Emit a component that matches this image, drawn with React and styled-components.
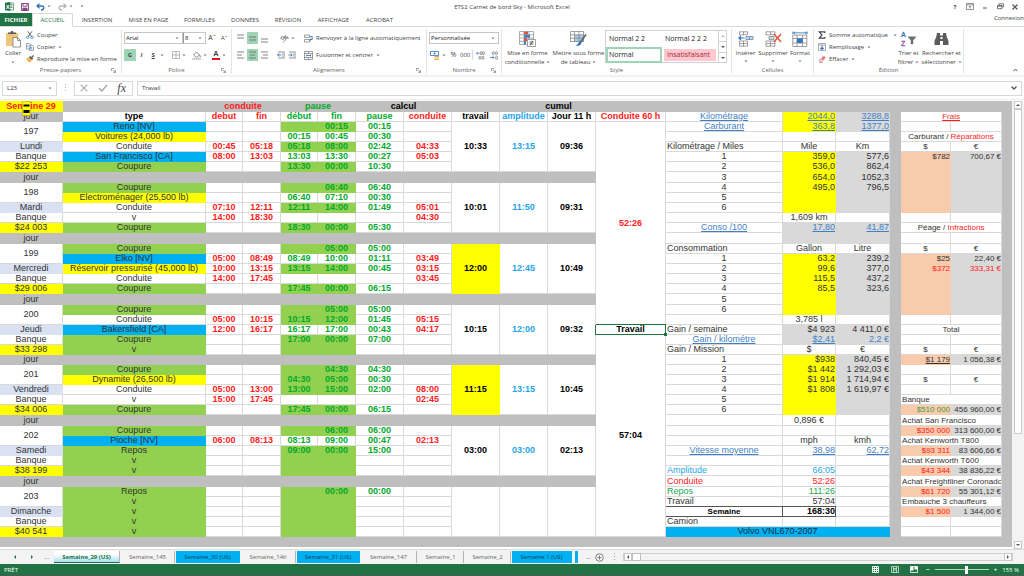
import React from "react";
import styled, { createGlobalStyle, css } from "styled-components";

const UI = '"Open Sans", "Noto Sans", sans-serif';
const SHEET = '"Liberation Sans", Arial, sans-serif';

const C = {
  excel: "#217346",
  line: "#d9d9d9",
  gray: "#bfbfbf",
  silver: "#d9d9d9",
  yellow: "#ffff00",
  blue: "#00b0f0",
  green: "#92d050",
  lavender: "#d9e1f2",
  peach: "#f8cbad",
  white: "#ffffff",
  red: "#ff1a1a",
  time: "#00aa2b",
  ink: "#333333",
  link: "#3f7fc6",
  sky: "#25a5ea",
};

const GlobalStyle = createGlobalStyle`
  *, *::before, *::after { box-sizing: border-box; }
  body { margin: 0; background: #fff; font: 6px/8px ${UI}; color: #444; }
  button, input, select { font: inherit; color: inherit; margin: 0; padding: 0; border: 0; background: none; }
  svg { display: block; flex: none; }
`;

const Window = styled.div`
  display: flex;
  flex-direction: column;
  min-height: 100vh;
  overflow: hidden;
`;

/* ---------- title bar and ribbon tabs ---------- */

const TitleBar = styled.header`
  display: grid;
  grid-template-columns: 1fr auto 1fr;
  align-items: center;
  height: 13px;
  padding: 0 5px;
`;

const TitleIcons = styled.div`
  display: flex;
  align-items: center;
  gap: ${(p) => p.$gap}px;
  justify-content: ${(p) => (p.$end ? "flex-end" : "flex-start")};
`;

const Title = styled.h1`
  margin: 0;
  font: inherit;
`;

const IconButton = styled.button`
  display: flex;
  align-items: center;
  justify-content: center;
  gap: 2px;
  flex: none;
  min-width: ${(p) => p.$w || 8}px;
  height: ${(p) => p.$h || 12}px;
  background: ${(p) => (p.$on ? "#9fd5b7" : "transparent")};
  font-weight: ${(p) => (p.$bold ? 700 : 400)};
  font-size: ${(p) => p.$size || 6}px;
`;

const Tabs = styled.nav`
  display: flex;
  height: 14px;
  border-bottom: 1px solid ${C.line};
`;

const Tab = styled.button`
  flex: none;
  width: ${(p) => p.$w}px;
  height: 14px;
  color: ${(p) => (p.$active ? C.excel : "#444")};
  ${(p) => p.$active && css`
    background: #fff;
    border: 1px solid ${C.line};
    border-bottom-color: #fff;
  `}
  ${(p) => p.$file && css`
    background: ${C.excel};
    color: #fff;
    font-weight: 700;
    height: 13px;
  `}
`;

const Connexion = styled.a`
  margin-left: auto;
  padding-top: 1px;
  color: #444;
  text-decoration: none;
`;

/* ---------- ribbon ---------- */

const Ribbon = styled.div`
  display: grid;
  grid-template-columns: 122px 110px 195px 75px 230px 82px 150px 1fr;
  height: 50px;
  padding: 2px 0;
  border-bottom: 2px solid #f1f1f1;
`;

const GroupBox = styled.section`
  display: flex;
  flex-direction: column;
  justify-content: space-between;
  border-right: 1px solid #e4e4e4;
  white-space: nowrap;
`;

const GroupBody = styled.div`
  display: flex;
  height: 37px;
  gap: ${(p) => p.$gap || 0}px;
  padding: ${(p) => p.$pad || "0"};
`;

const GroupFoot = styled.footer`
  display: grid;
  grid-template-columns: 10px 1fr 10px;
  align-items: center;
  height: 8px;
  text-align: center;
  color: #666;
`;

const Column = styled.div`
  display: flex;
  flex-direction: column;
  align-items: flex-start;
  gap: ${(p) => p.$gap || 0}px;
`;

const Line = styled.div`
  display: flex;
  align-items: center;
  gap: ${(p) => p.$gap || 0}px;
  height: 12px;
`;

const BigButton = styled.button`
  display: flex;
  flex-direction: column;
  align-items: center;
  gap: 1px;
  width: ${(p) => p.$w}px;
  line-height: 8px;
`;

const BigIcon = styled.span`
  display: flex;
  align-items: center;
  justify-content: center;
  height: 19px;
`;

const CommandButton = styled.button`
  display: flex;
  align-items: center;
  gap: 3px;
  height: 12px;
`;

const CommandRow = styled.span`
  display: flex;
  align-items: center;
  gap: 2px;
  height: 8px;
`;

const Combo = styled.span`
  position: relative;
  display: flex;
  width: ${(p) => p.$w}px;
  height: 12px;
  border: 1px solid #c6c6c6;
  & + & { border-left-color: #999; }
  select {
    appearance: none;
    width: 100%;
    padding-left: 1px;
    color: #222;
  }
`;

const ComboArrow = styled.span`
  position: absolute;
  right: 3px;
  top: 4px;
  pointer-events: none;
`;

const VLine = styled.span`
  width: 1px;
  height: 10px;
  background: ${C.line};
`;

const Gallery = styled.div`
  display: grid;
  grid-template-columns: 56px 56px 8px;
  grid-template-rows: 16px 16px;
  height: 33px;
  border: 1px solid #d0d0d0;
`;

const StyleCell = styled.button`
  padding-left: ${(p) => (p.$on ? 1 : 3)}px;
  text-align: left;
  font-size: 7px;
  color: ${(p) => (p.$bad ? "#9c2b3a" : "#222")};
  background: ${(p) => (p.$bad ? "#ffc7ce" : "#fff")};
  margin: ${(p) => (p.$bad ? "2px" : "0")};
  border: ${(p) => (p.$on ? "2px solid #9fd5b7" : "0")};
`;

const GalleryScroll = styled.div`
  grid-column: 3;
  grid-row: 1 / 3;
  display: flex;
  flex-direction: column;
  border-left: 1px solid #d0d0d0;
  button {
    flex: 1;
    display: flex;
    align-items: center;
    justify-content: center;
  }
  button + button { border-top: 1px solid #d0d0d0; }
`;

const CollapseCorner = styled.div`
  display: flex;
  justify-content: flex-end;
  align-items: flex-end;
  padding: 0 6px 2px 0;
`;

/* ---------- formula bar ---------- */

const FormulaBar = styled.div`
  display: flex;
  align-items: center;
  gap: 4px;
  height: 23px;
  padding: 0 2px;
  border-bottom: 1px solid #ededed;
`;

const Field = styled.label`
  display: flex;
  align-items: center;
  height: 15px;
  border: 1px solid ${C.line};
  padding: 0 4px;
  ${(p) => (p.$w ? `width: ${p.$w}px;` : "flex: 1;")}
  input {
    flex: 1;
    min-width: 0;
    font-size: 6px;
    color: #333;
    outline: 0;
  }
`;

const FormulaButtons = styled.div`
  display: flex;
  align-items: center;
  justify-content: space-between;
  width: 59px;
  height: 15px;
  padding: 0 6px 0 5px;
  border: 1px solid ${C.line};
`;

/* ---------- sheet ---------- */

const SheetArea = styled.main`
  display: flex;
  flex: 1;
  padding-top: 1px;
`;

const SheetPane = styled.div`
  position: relative;
  flex: 1;
  min-width: 0;
`;

const Grid = styled.table`
  width: 100%;
  table-layout: fixed;
  border-collapse: separate;
  border-spacing: 0;
  font: 9px/9px ${SHEET};
`;

const Row = styled.tr`
  height: ${(p) => p.$h || 10}px;
`;

const Cell = styled.td`
  padding: ${(p) => (p.$align === "left" ? "0 0 0 1px" : "0")};
  overflow: hidden;
  white-space: nowrap;
  vertical-align: middle;
  text-align: ${(p) => p.$align || "center"};
  background: ${(p) => p.$bg || C.white};
  color: ${(p) => p.$color || C.ink};
  font-weight: ${(p) => (p.$bold ? 700 : 400)};
  font-size: ${(p) => (p.$small ? 8 : 9)}px;
  text-decoration: ${(p) => (p.$under ? "underline" : "none")};
  border: 0 solid ${(p) => (p.$bg && p.$bg !== C.white ? p.$bg : C.line)};
  border-width: 0 1px 1px 0;
  ${(p) => p.$framed && css`
    border-color: #555;
    box-shadow: 0 -1px 0 #555;
  `}
  ${(p) => p.$selected && css`
    position: relative;
    overflow: visible;
    border-color: ${C.excel};
    box-shadow: -1px 0 0 ${C.excel}, 0 -1px 0 ${C.excel};
    color: #000;
    &::after {
      content: "";
      position: absolute;
      right: -2px;
      bottom: -2px;
      width: 3px;
      height: 3px;
      background: ${C.excel};
    }
  `}
`;

const Accent = styled.span`
  color: ${(p) => p.$color};
`;

const Cursor = styled.span`
  position: absolute;
  left: 22px;
  top: 0;
`;

const Scrollbar = styled.div`
  display: flex;
  flex-direction: column;
  width: 12px;
  padding: 0 2px;
  background: #f3f3f3;
`;

const ScrollButton = styled.button`
  display: flex;
  align-items: center;
  justify-content: center;
  width: 8px;
  height: 8px;
  border: 1px solid #c8c8c8;
  background: #fff;
`;

const ScrollTrack = styled.div`
  flex: 1;
`;

const ScrollThumb = styled.div`
  flex: 3;
  border: 1px solid #c8c8c8;
  background: #fff;
`;

/* ---------- sheet tabs and status bar ---------- */

const SheetBar = styled.div`
  display: flex;
  align-items: center;
  height: 15px;
  background: #f3f3f3;
  border-top: 1px solid #dcdcdc;
`;

const TabNav = styled.div`
  display: flex;
  align-items: center;
  justify-content: space-between;
  width: 54px;
  padding: 0 5px 0 11px;
`;

const SheetTab = styled.button`
  flex: none;
  width: ${(p) => p.$w}px;
  height: 12px;
  margin-right: 1px;
  color: ${(p) => (p.$blue ? "#063c60" : "#666")};
  background: ${(p) => (p.$blue ? C.blue : "transparent")};
  border-right: 1px solid ${(p) => (p.$blue ? C.blue : "#b5b5b5")};
  ${(p) => p.$active && css`
    color: ${C.excel};
    font-weight: 700;
    background: linear-gradient(#fff 30%, #a8e0f6);
    border-bottom: 1px solid ${C.excel};
  `}
`;

const TabSliver = styled.span`
  width: 3px;
  height: 12px;
  margin: 0 8px 0 2px;
  background: ${C.blue};
`;

const HScroll = styled.div`
  display: flex;
  flex: 1;
  align-items: center;
  margin: 0 11px 0 5px;
  height: 8px;
  border: 1px solid #d0d0d0;
  span { width: 9px; height: 8px; border: 1px solid #c0c0c0; background: #fff; }
  button:last-child { margin-left: auto; }
`;

const StatusBar = styled.footer`
  display: flex;
  align-items: center;
  height: 12px;
  padding: 0 5px 0 4px;
  background: ${C.excel};
  border-bottom: 1px solid #4d5a52;
  color: #fff;
`;

const StatusTools = styled.div`
  display: flex;
  align-items: center;
  gap: 5px;
  margin-left: auto;
`;

const Zoom = styled.input`
  appearance: none;
  width: 54px;
  height: 8px;
  background: linear-gradient(#b8d6c5, #b8d6c5) center / 100% 1px no-repeat;
  &::-webkit-slider-thumb {
    appearance: none;
    width: 3px;
    height: 8px;
    background: #fff;
  }
`;

/* ---------- icons ---------- */

const Arrow = ({ c = "#777" }) => (
  <svg width="4" height="3" viewBox="0 0 4 3"><path d="M.5.5h3L2 2.3z" fill={c} /></svg>
);

const Launcher = () => (
  <svg width="5" height="5" viewBox="0 0 5 5" fill="none" stroke="#777" strokeWidth=".7">
    <path d="M.5 3V.5H3M2 2l2.3 2.3M4.5 2.4v2.1H2.4" />
  </svg>
);

const ExcelLogo = () => (
  <svg width="9" height="9" viewBox="0 0 9 9">
    <path d="M4 1h4.5v7H4z" fill="#fff" stroke={C.excel} strokeWidth=".6" />
    <path d="M5.5 2.5h2M5.5 4h2M5.5 5.500h2" stroke={C.excel} strokeWidth=".7" />
    <path d="M0 .8 5.300 0v9L0 8.200z" fill={C.excel} />
    <text x="2.700" y="6.500" textAnchor="middle" fontSize="6" fontWeight="700" fill="#fff">X</text>
  </svg>
);

const SaveIcon = () => (
  <svg width="8" height="8" viewBox="0 0 8 8" fill="none" stroke="#80397b">
    <path d="M.5.5h7v7h-7zM2 .5v2.700h4V.5" strokeWidth=".9" />
    <path d="M2 7.500V5.200h4v2.300" fill="#80397b" />
  </svg>
);

const UndoIcon = ({ c, flip }) => (
  <svg width="9" height="8" viewBox="0 0 9 8" fill="none" stroke={c} strokeWidth="1.300">
    <g transform={flip ? "matrix(-1 0 0 1 9 0)" : undefined}>
      <path d="M1 3h4.500C9 3 8.500 6.800 5 7M3.500.6 1 3l2.500 2.400" />
    </g>
  </svg>
);

const RibbonOptions = () => (
  <svg width="8" height="7" viewBox="0 0 8 7" fill="none" stroke="#666" strokeWidth=".7">
    <path d="M.5.5h7v6h-7zM.5 1.800h7M4 5.600V3M3 4l1-1 1 1" />
  </svg>
);

const MinIcon = () => (
  <svg width="6" height="6" viewBox="0 0 6 6"><path d="M1 4h4" stroke="#555" /></svg>
);

const RestoreIcon = () => (
  <svg width="7" height="7" viewBox="0 0 7 7" fill="none" stroke="#555" strokeWidth=".8">
    <path d="M2 2V.8h4.500v3H5M.5 2.500H5v3.200H.5zM.5 3.200H5" />
  </svg>
);

const Cross = ({ s = 6, c = "#555", w = 1.2 }) => (
  <svg width={s} height={s} viewBox="0 0 6 6"><path d="M.5.5l5 5M5.500.5l-5 5" stroke={c} strokeWidth={w} /></svg>
);

const PasteIcon = () => (
  <svg width="17" height="18" viewBox="0 0 17 18">
    <path d="M1 3h12v13H1z" fill="#f0c67b" />
    <path d="M3 4V2.500h2.500C5.500.5 8.500.5 8.500 2.500H11V4z" fill="#5b5b5b" />
    <path d="M8 7.500h4.500l3 3V17H8z" fill="#fff" stroke="#777" strokeWidth=".8" />
    <path d="M12.500 7.500v3h3" fill="none" stroke="#777" strokeWidth=".8" />
  </svg>
);

const CutIcon = () => (
  <svg width="8" height="8" viewBox="0 0 8 8" fill="none">
    <path d="M1.800.3 5.500 5.400M6 .3 2.300 5.400" stroke="#555" strokeWidth=".9" />
    <circle cx="1.700" cy="6.300" r="1.200" stroke="#3f7fc6" strokeWidth=".8" />
    <circle cx="6" cy="6.300" r="1.200" stroke="#3f7fc6" strokeWidth=".8" />
  </svg>
);

const CopyIcon = () => (
  <svg width="8" height="8" viewBox="0 0 8 8" fill="#fff" stroke="#6c86a8" strokeWidth=".7">
    <path d="M.5.5h3l1.200 1.200V6H.5zM3.300 2.300h3l1.200 1.200v4H3.300z" />
    <path d="M4.300 4.500h2M4.300 5.800h2M1.300 2.300h1M1.300 3.800h1" />
  </svg>
);

const BrushIcon = () => (
  <svg width="8" height="8" viewBox="0 0 8 8">
    <path d="M.3 3.500 3 2l3 3-2 2.700C2.500 7.500 1 6 .3 3.500z" fill="#efb65d" />
    <path d="M3 2.300 4.200 1l3 2.600L6 5z" fill="#555" />
    <path d="M5.800 2.300 7.700.5" stroke="#555" strokeWidth="1.200" />
  </svg>
);

const Bars = ({ ys, widths, side }) => (
  <svg width="9" height="9" viewBox="0 0 9 9" stroke="#666" strokeWidth=".8">
    {ys.map((y, i) => {
      const x = side === "left" ? 1 : side === "right" ? 8 - widths[i] : (9 - widths[i]) / 2;
      return <path key={y} d={`M${x} ${y}h${widths[i]}`} />;
    })}
  </svg>
);

const OrientIcon = () => (
  <svg width="9" height="9" viewBox="0 0 9 9" fill="none" stroke="#666">
    <ellipse cx="2.600" cy="4" rx="1.700" ry="1.300" strokeWidth=".8" />
    <path d="M4 2l1 3M5.500 1v3.500M3 8.500 8 3M8 5V3H6" strokeWidth=".7" />
  </svg>
);

const IndentIcon = ({ flip }) => (
  <svg width="9" height="8" viewBox="0 0 9 8" fill="none">
    <path d="M1 1h7M5 3h3M5 5h3M1 7h7" stroke="#777" strokeWidth=".8" />
    <path d={flip ? "M.5 4h3.500M2.800 2.500 4.200 4 2.800 5.500" : "M4.200 4H.8M2 2.500.6 4 2 5.500"} stroke="#2f74c0" strokeWidth=".9" />
  </svg>
);

const WrapIcon = () => (
  <svg width="9" height="9" viewBox="0 0 9 9" fill="none">
    <path d="M.5 1h5v2.500h-5zM.5 5.500h5V8h-5z" stroke="#777" strokeWidth=".7" />
    <path d="M6 2.500h2.200v3H6M7 4.500l-1.200 1L7 6.700" stroke="#2f74c0" strokeWidth=".9" />
  </svg>
);

const MergeIcon = () => (
  <svg width="9" height="9" viewBox="0 0 9 9" fill="none">
    <path d="M.5.5h8v8h-8zM.5 2.500h8M.5 6.500h8M4.500.5v2M4.500 6.500v2" stroke="#777" strokeWidth=".7" />
    <path d="M2 4.500h5M3 3.600l-1 .9 1 .9M6 3.600l1 .9-1 .9" stroke="#2f74c0" strokeWidth=".8" />
  </svg>
);

const BorderIcon = () => (
  <svg width="8" height="8" viewBox="0 0 8 8" fill="none" stroke="#aaa" strokeWidth=".8">
    <path d="M.5.5h7v7h-7zM4 .5v7M.5 4h7" />
  </svg>
);

const FillIcon = () => (
  <svg width="9" height="9" viewBox="0 0 9 9" fill="none">
    <path d="M1.500 4 4.500 1l3 3-3 2.600z" stroke="#666" strokeWidth=".8" />
    <path d="M7.500 4c1 1 1 2 .5 2.500" stroke="#2f74c0" />
    <path d="M.5 7.500h8V9h-8z" fill="#ddd" stroke="#aaa" strokeWidth=".4" />
  </svg>
);

const FontColor = styled.span`
  width: 8px;
  border-bottom: 2px solid #e81123;
  font-weight: 700;
  font-size: 7px;
  line-height: 8px;
`;

const Strong = styled.span`
  font-weight: 700;
  text-decoration: ${(p) => (p.$u ? "underline" : "none")};
  font-style: ${(p) => (p.$i ? "italic" : "normal")};
`;

const MoneyIcon = () => (
  <svg width="10" height="9" viewBox="0 0 10 9" fill="none">
    <path d="M.5.5h8v4h-8z" stroke="#2f74c0" strokeWidth=".8" />
    <circle cx="4.500" cy="2.500" r="1" fill="#2f74c0" />
    <path d="M4.500 5.500h4.500M4.500 7h4.500M4.500 8.500h4" stroke="#e9a23b" strokeWidth=".9" />
  </svg>
);

const DecimalIcon = ({ less }) => (
  <svg width="9" height="9" viewBox="0 0 9 9" fill="none" stroke="#777" strokeWidth=".8">
    <ellipse cx={less ? 4.3 : 5} cy="2.200" rx="1" ry="1.500" />
    <ellipse cx="7.500" cy="2.200" rx="1" ry="1.500" />
    <ellipse cx={less ? 7.5 : 4} cy="6.800" rx="1" ry="1.500" />
    {!less && <ellipse cx="7" cy="6.800" rx="1" ry="1.500" />}
    <path d={less ? "M1 6.500h4M3.500 5.300 5 6.500 3.500 7.700" : "M3 2.300H.5M1.500 1.200.4 2.300l1.100 1.100"} stroke="#2f74c0" />
  </svg>
);

const CondIcon = () => (
  <svg width="17" height="16" viewBox="0 0 17 16">
    <path d="M.5.5h14v13H.5zM.5 3.700h14M.5 7h14M.5 10.300h14M5 .5v13M10 .5v13" fill="none" stroke="#999" strokeWidth=".8" />
    <path d="M5 .8h4v2.800H5zM5 7h3v3H5z" fill="#e0533a" />
    <path d="M5 3.800h6v3H5zM5 10.300h2v3H5z" fill="#3f7fc6" />
    <path d="M8.500 8.500h8v7h-8z" fill="#fff" stroke="#777" strokeWidth=".7" />
    <path d="M10.500 11h4M10.500 13h4M14 9.800l-3 4.400" stroke="#444" strokeWidth=".8" />
  </svg>
);

const TableStyleIcon = () => (
  <svg width="17" height="16" viewBox="0 0 17 16" fill="none">
    <path d="M5 4h9v7H5z" fill="#a9c9ea" />
    <path d="M.5.5h13v10H.5zM.5 3.800h13M.5 7.200h13M4.500.5v10M9 .5v10" stroke="#888" strokeWidth=".8" />
    <path d="M16 3.500 10.500 11" stroke="#666" strokeWidth="1.800" />
    <path d="M10 10.500c2 0 2 2 0 3.500-1.500 1-3 1-4.500.5 2.500-.5 2.500-3 4.500-4z" fill="#2f74c0" />
  </svg>
);

const InsertIcon = () => (
  <svg width="16" height="16" viewBox="0 0 16 16" fill="none" stroke="#888" strokeWidth=".8">
    <path d="M1.500.8h8v3h-8zM5.500.8v3M1.500 10h8v5.200h-8zM5.500 10v5.200M1.500 12.600h8" />
    <path d="M8 5.500h7v3H8zM11.500 5.500v3" fill="#c6dcf2" stroke="#6c86a8" />
    <path d="M6.500 7H1M3 5 1 7l2 2" stroke="#2f74c0" strokeWidth="1.200" />
  </svg>
);

const DeleteIcon = () => (
  <svg width="17" height="16" viewBox="0 0 17 16" fill="none" stroke="#888" strokeWidth=".8">
    <path d="M1 .8h9v3H1zM5.500.8v3M1 10h9v5.200H1zM5.500 10v5.200M1 12.600h9" />
    <path d="M4 5.500h5v3H4z" fill="#c6dcf2" />
    <path d="M9 3l7 8M16 3l-7 8" stroke="#e0533a" strokeWidth="1.500" />
  </svg>
);

const FormatIcon = () => (
  <svg width="16" height="16" viewBox="0 0 16 16" fill="none" stroke="#888" strokeWidth=".8">
    <path d="M.8 4h14v11.500H.8zM.8 7.500h14M.8 12h14M5 4v11.500M10.500 4v11.500" />
    <path d="M5 7.500h5.500V12H5z" fill="#2f74c0" stroke="none" />
    <path d="M1.500 1.800h13M3 .6 1.500 1.800 3 3M13 .6l1.500 1.200L13 3M.8.5v2.700M15.200.5v2.700" stroke="#2f74c0" />
  </svg>
);

const SumIcon = () => (
  <svg width="8" height="8" viewBox="0 0 8 8"><path d="M6.800 2V.8H1.200L4 4 1.200 7.200h5.600V6" fill="none" stroke="#444" strokeWidth="1.200" /></svg>
);

const FillDownIcon = () => (
  <svg width="8" height="8" viewBox="0 0 8 8" fill="none">
    <path d="M.5.5h7v7h-7zM.5 2h7" stroke="#888" strokeWidth=".7" />
    <path d="M4 2.500v4M2.300 4.800 4 6.500l1.700-1.700" stroke="#2f74c0" strokeWidth="1.200" />
  </svg>
);

const EraserIcon = () => (
  <svg width="8" height="8" viewBox="0 0 8 8">
    <path d="M3 3.500 5.800.7l2 2L5 5.500z" fill="#e8788f" />
    <path d="M3 3.500 5 5.500 3.700 6.800H2L.8 5.600z" fill="#f5c3cd" stroke="#c97082" strokeWidth=".4" />
    <path d="M1 7.500h4" stroke="#888" strokeWidth=".6" />
  </svg>
);

const SortIcon = () => (
  <svg width="17" height="18" viewBox="0 0 17 18" fontFamily="Liberation Sans, sans-serif" fontSize="7">
    <text x="1" y="7" fill="#2f74c0" stroke="#2f74c0" strokeWidth=".3">A</text>
    <text x="1" y="16" fill="#8e44ad" stroke="#8e44ad" strokeWidth=".3">Z</text>
    <path d="M7.500 6.500h9l-3.300 3.700v4h-2.400v-4z" fill="#6b6b6b" />
  </svg>
);

const FindIcon = () => (
  <svg width="15" height="14" viewBox="0 0 15 14" fill="#5c5c5c">
    <path d="M3 1h3v2.500h3V1h3l.8 4L14.500 9v4H9V9H6v4H.5V9l1.700-4z" />
    <path d="M6.500 5h2v2h-2z" fill="#fff" />
  </svg>
);

const CheckIcon = () => (
  <svg width="10" height="8" viewBox="0 0 10 8"><path d="M1 4.200 3.800 7 9 1" fill="none" stroke="#aaa" strokeWidth="1.500" /></svg>
);

const Fx = styled.em`
  font: italic 12px/12px "Liberation Serif", serif;
  color: #444;
`;

const Tri = ({ d, c = "#555" }) => (
  <svg width="4" height="4" viewBox="0 0 4 4" fill={c}><path d={d} /></svg>
);
const UP = "M0 3h4L2 1z";
const DOWN = "M0 1h4L2 3z";
const LEFT = "M3 0v4L1 2z";
const RIGHT = "M1 0v4l2-2z";

/* ---------- workbook data ---------- */

const COLUMNS = [63, 143, 37, 38, 37, 38, 48, 48, 48, 48, 48, 70, 117, 53, 54, 11, 50, 51, 10];

const HEADERS = [
  ["type", "#000"], ["debut", C.red], ["fin", C.red], ["début", C.time], ["fin", C.time],
  ["pause", C.time], ["conduite", C.red], ["travail", "#000"], ["amplitude", C.sky],
  ["Jour 11 h", "#000"], ["Conduite 60 h", C.red],
];

const FILLS = { g: C.green, b: C.blue, y: C.yellow, w: C.white };

/* each line: label, label fill, drive start, drive end, break fill, break start, break end, break total, drive total */
const DAYS = [
  { n: "197", day: "Lundi", bank: "$22 253", work: "10:33", amp: "13:15", total: "09:36", lines: [
    ["Reno [NV]", "b", "", "", "g", "", "00:15", "00:15", ""],
    ["Voitures (24,000 lb)", "y", "", "", "w", "00:15", "00:45", "00:30", ""],
    ["Conduite", "w", "00:45", "05:18", "g", "05:18", "08:00", "02:42", "04:33"],
    ["San Francisco [CA]", "b", "08:00", "13:03", "w", "13:03", "13:30", "00:27", "05:03"],
    ["Coupure", "g", "", "", "g", "13:30", "00:00", "10:30", ""],
  ] },
  { n: "198", day: "Mardi", bank: "$24 003", work: "10:01", amp: "11:50", total: "09:31", lines: [
    ["Coupure", "g", "", "", "g", "", "06:40", "06:40", ""],
    ["Electroménager (25,500 lb)", "y", "", "", "w", "06:40", "07:10", "00:30", ""],
    ["Conduite", "w", "07:10", "12:11", "g", "12:11", "14:00", "01:49", "05:01"],
    ["v", "w", "14:00", "18:30", "w", "", "", "", "04:30"],
    ["Coupure", "g", "", "", "g", "18:30", "00:00", "05:30", ""],
  ] },
  { n: "199", day: "Mercredi", bank: "$29 006", work: "12:00", over: true, amp: "12:45", total: "10:49", lines: [
    ["Coupure", "g", "", "", "g", "", "05:00", "05:00", ""],
    ["Elko [NV]", "b", "05:00", "08:49", "w", "08:49", "10:00", "01:11", "03:49"],
    ["Réservoir pressurisé (45,000 lb)", "y", "10:00", "13:15", "g", "13:15", "14:00", "00:45", "03:15"],
    ["Conduite", "w", "14:00", "17:45", "w", "", "", "", "03:45"],
    ["Coupure", "g", "", "", "g", "17:45", "00:00", "06:15", ""],
  ] },
  { n: "200", day: "Jeudi", bank: "$33 298", work: "10:15", amp: "12:00", total: "09:32", lines: [
    ["Coupure", "g", "", "", "g", "", "05:00", "05:00", ""],
    ["Conduite", "w", "05:00", "10:15", "g", "10:15", "12:00", "01:45", "05:15"],
    ["Bakersfield [CA]", "b", "12:00", "16:17", "w", "16:17", "17:00", "00:43", "04:17"],
    ["Coupure", "g", "", "", "g", "17:00", "00:00", "07:00", ""],
    ["v", "g", "", "", "g", "", "", "", ""],
  ] },
  { n: "201", day: "Vendredi", bank: "$34 006", work: "11:15", over: true, amp: "13:15", total: "10:45", lines: [
    ["Coupure", "g", "", "", "g", "", "04:30", "04:30", ""],
    ["Dynamite (26,500 lb)", "y", "", "", "g", "04:30", "05:00", "00:30", ""],
    ["Conduite", "w", "05:00", "13:00", "g", "13:00", "15:00", "02:00", "08:00"],
    ["v", "w", "15:00", "17:45", "w", "", "", "", "02:45"],
    ["Coupure", "g", "", "", "g", "17:45", "00:00", "06:15", ""],
  ] },
  { n: "202", day: "Samedi", bank: "$38 199", work: "03:00", amp: "03:00", total: "02:13", lines: [
    ["Coupure", "g", "", "", "g", "", "06:00", "06:00", ""],
    ["Pioche [NV]", "b", "06:00", "08:13", "w", "08:13", "09:00", "00:47", "02:13"],
    ["Repos", "g", "", "", "g", "09:00", "00:00", "15:00", ""],
    ["v", "g", "", "", "g", "", "", "", ""],
    ["v", "g", "", "", "g", "", "", "", ""],
  ] },
  { n: "203", day: "Dimanche", bank: "$40 541", work: "", amp: "", total: "", lines: [
    ["Repos", "g", "", "", "g", "", "00:00", "00:00", ""],
    ["v", "g", "", "", "g", "", "", "", ""],
    ["v", "g", "", "", "g", "", "", "", ""],
    ["v", "g", "", "", "g", "", "", "", ""],
    ["v", "g", "", "", "g", "", "", "", ""],
  ] },
];

const num = (text, bg, extra = {}) => ({ text, bg, align: "right", ...extra });
const mid = (text = "", extra = {}) => ({ text, ...extra });
const left = (text, extra = {}) => ({ text, align: "left", ...extra });
const link = { color: C.link, under: true };
const pair = (label, a, b) => [mid(label), num(a, C.yellow), num(b, C.silver)];
const blank = () => [mid(), mid(), mid()];

const SUMMARY = [
  [mid("Kilométrage", link), num("2044,0", C.yellow, link), num("3288,8", C.silver, link)],
  [mid("Carburant", link), num("363,8", C.yellow, link), num("1377,0", C.silver, link)],
  blank(),
  [left("Kilométrage / Miles"), mid("Mile"), mid("Km")],
  pair("1", "359,0", "577,6"),
  pair("2", "536,0", "862,4"),
  pair("3", "654,0", "1052,3"),
  pair("4", "495,0", "796,5"),
  pair("5", "", ""),
  pair("6", "", ""),
  [mid(), mid("1,609 km"), mid()],
  [mid("Conso /100", link), num("17,80", C.silver, link), num("41,87", C.silver, link)],
  [mid(), num("", C.silver), num("", C.silver)],
  [left("Consommation"), mid("Gallon"), mid("Litre")],
  pair("1", "63,2", "239,2"),
  pair("2", "99,6", "377,0"),
  pair("3", "115,5", "437,2"),
  pair("4", "85,5", "323,6"),
  pair("5", "", ""),
  pair("6", "", ""),
  [mid(), mid("3,785 l"), mid()],
  [left("Gain / semaine"), num("$4 923", C.silver), num("4 411,0 €", C.silver)],
  [mid("Gain / kilométre", link), num("$2,41", C.silver, link), num("2,2 €", C.silver, { color: C.link })],
  [left("Gain / Mission"), mid("$"), mid("€")],
  pair("1", "$938", "840,45 €"),
  pair("2", "$1 442", "1 292,03 €"),
  pair("3", "$1 914", "1 714,94 €"),
  pair("4", "$1 808", "1 619,97 €"),
  pair("5", "", ""),
  pair("6", "", ""),
  [mid(), mid("0,896 €"), mid()],
  blank(),
  [mid(), mid("mph"), mid("kmh")],
  [mid("Vitesse moyenne", link), num("38,98", C.white, link), num("62,72", C.white, link)],
  blank(),
  [left("Amplitude", { color: C.sky }), num("66:05", C.white, { color: C.sky }), mid()],
  [left("Conduite", { color: C.red }), num("52:26", C.white, { color: C.red }), mid()],
  [left("Repos", { color: "#22a84c" }), num("111:26", C.white, { color: "#22a84c" }), mid()],
  [left("Travail"), num("57:04", C.white), mid()],
  [mid("Semaine", { bold: true, small: true, framed: true, color: "#000" }), num("168:30", C.white, { bold: true, framed: true, color: "#000" }), mid()],
  [left("Camion"), mid(), mid()],
  [mid("Volvo VNL670-2007", { bg: C.blue, span: 3, color: "#10304a" })],
];

const s = { small: true };
const red = { small: true, color: C.red };
const wide = (text, extra = {}) => [{ text, span: 2, small: true, ...extra }];
const money = (a, b, ca, cb) => [
  num(a, C.peach, { small: true, color: ca }),
  num(b, C.silver, { small: true, color: cb }),
];
const none = () => [mid(), mid()];
const signs = () => [mid("$", s), mid("€", s)];
const plain = () => money("", "");

const COSTS = [
  wide("Frais", { ...red, under: true }),
  none(),
  wide(<>Carburant / <Accent $color={C.red}>Réparations</Accent></>),
  signs(),
  money("$782", "700,67 €"),
  plain(), plain(), plain(), plain(), plain(),
  none(),
  wide(<>Péage / <Accent $color={C.red}>Infractions</Accent></>),
  none(),
  signs(),
  money("$25", "22,40 €"),
  money("$372", "333,31 €", C.red, C.red),
  plain(), plain(), plain(), plain(),
  none(),
  wide("Total"),
  none(),
  signs(),
  [num("$1 179", C.peach, { small: true, under: true }), num("1 056,38 €", C.silver, s)],
  none(),
  signs(),
  none(),
  wide("Banque", { align: "left" }),
  money("$510 000", "456 960,00 €", "#43a047"),
  wide("Achat San Francisco", { align: "left" }),
  money("$350 000", "313 600,00 €", C.red),
  wide("Achat Kenworth T800", { align: "left" }),
  money("$93 311", "83 606,66 €", C.red),
  wide("Achat Kenworth T600", { align: "left" }),
  money("$43 344", "38 836,22 €", C.red),
  wide("Achat Freightliner Coronado", { align: "left" }),
  money("$61 720", "55 301,12 €", C.red),
  wide("Embauche 3 chauffeurs", { align: "left" }),
  money("$1 500", "1 344,00 €", C.red),
  none(),
  none(),
];

const SHEET_TABS = [
  ["Semaine_29 (US)", 66, "active"], ["Semaine_145", 54], ["Semaine_30 (US)", 64, "blue"],
  ["Semaine_146", 55], ["Semaine_31 (US)", 63, "blue"], ["Semaine_147", 56],
  ["Semaine_1", 46], ["Semaine_2", 46], ["Semaine 1 (US)", 60, "blue"],
];

const RIBBON_TABS = [
  ["INSERTION", 48], ["MISE EN PAGE", 55], ["FORMULES", 47], ["DONNÉES", 44],
  ["RÉVISION", 42], ["AFFICHAGE", 49], ["ACROBAT", 43],
];

/* ---------- sheet rendering ---------- */

const Data = ({ cell }) => (
  <Cell
    colSpan={cell.span}
    $bg={cell.bg}
    $color={cell.color}
    $align={cell.align}
    $bold={cell.bold}
    $small={cell.small}
    $under={cell.under}
    $framed={cell.framed}
  >
    {cell.text}
  </Cell>
);

const Center60 = ({ row }) => {
  if (row === 2) return <Cell rowSpan={20} $bold $color={C.red}>52:26</Cell>;
  if (row === 22) return <Cell $bold $selected>Travail</Cell>;
  if (row === 23) return <Cell rowSpan={20} $bold $color="#000">57:04</Cell>;
  return null;
};

const RightSide = ({ row }) => (
  <>
    {SUMMARY[row - 1].map((cell, i) => <Data key={`s${i}`} cell={cell} />)}
    <Cell $bg={C.gray} />
    {COSTS[row - 1].map((cell, i) => <Data key={`c${i}`} cell={cell} />)}
    <Cell $bg={C.gray} />
  </>
);

const DayRow = ({ day, i, row }) => {
  const [label, fill, d1, d2, pFill, p1, p2, pause, drive] = day.lines[i];
  return (
    <Row>
      {i === 0 && <Cell rowSpan={2}>{day.n}</Cell>}
      {i === 2 && <Cell $bg={C.lavender}>{day.day}</Cell>}
      {i === 3 && <Cell>Banque</Cell>}
      {i === 4 && <Cell $bg={C.yellow}>{day.bank}</Cell>}
      <Cell $bg={FILLS[fill]}>{label}</Cell>
      <Cell $bold $color={C.red}>{d1}</Cell>
      <Cell $bold $color={C.red}>{d2}</Cell>
      <Cell $bold $color={C.time} $bg={FILLS[pFill]}>{p1}</Cell>
      <Cell $bold $color={C.time} $bg={FILLS[pFill]}>{p2}</Cell>
      <Cell $bold $color={C.time}>{pause}</Cell>
      <Cell $bold $color={C.red}>{drive}</Cell>
      {i === 0 && (
        <>
          <Cell rowSpan={5} $bold $color="#000" $bg={day.over ? C.yellow : C.white}>{day.work}</Cell>
          <Cell rowSpan={5} $bold $color={C.sky}>{day.amp}</Cell>
          <Cell rowSpan={5} $bold $color="#000">{day.total}</Cell>
        </>
      )}
      <Center60 row={row} />
      <RightSide row={row} />
    </Row>
  );
};

const Sheet = () => (
  <Grid>
    <colgroup>
      {COLUMNS.map((w, i) => <col key={i} width={w} />)}
    </colgroup>
    <tbody>
      <Row $h={11}>
        <Cell $bg={C.yellow} $bold $color={C.red}>Semaine 29</Cell>
        <Cell $bg={C.gray} />
        <Cell $bg={C.gray} $bold $color={C.red} colSpan={2}>conduite</Cell>
        <Cell $bg={C.gray} $bold $color={C.time} colSpan={2}>pause</Cell>
        <Cell $bg={C.gray} $bold $color="#000" colSpan={2}>calcul</Cell>
        <Cell $bg={C.gray} $bold $color="#000" colSpan={4}>cumul</Cell>
        <Cell $bg={C.gray} colSpan={7} />
      </Row>
      <Row>
        <Cell $bg={C.gray}>jour</Cell>
        {HEADERS.map(([text, color], i) => (
          <Cell key={i} $bold $color={color}>{text}</Cell>
        ))}
        <RightSide row={1} />
      </Row>
      {DAYS.map((day, d) => (
        <React.Fragment key={day.n}>
          {d > 0 && (
            <Row $h={d === 4 ? 10 : 11}>
              <Cell $bg={C.gray}>jour</Cell>
              <Cell $bg={C.gray} colSpan={10} />
              <RightSide row={d * 6 + 1} />
            </Row>
          )}
          {day.lines.map((_, i) => <DayRow key={i} day={day} i={i} row={d * 6 + 2 + i} />)}
        </React.Fragment>
      ))}
      <Row><Cell $bg={C.gray} colSpan={19} /></Row>
    </tbody>
  </Grid>
);

/* ---------- ribbon rendering ---------- */

const Group = ({ name, gap, pad, launcher, children }) => (
  <GroupBox>
    <GroupBody $gap={gap} $pad={pad}>{children}</GroupBody>
    <GroupFoot><span /><span>{name}</span>{launcher && <Launcher />}</GroupFoot>
  </GroupBox>
);

const Big = ({ icon, w, a, b }) => (
  <BigButton $w={w}>
    <BigIcon>{icon}</BigIcon>
    <span>{a}</span>
    <CommandRow>{b}<Arrow /></CommandRow>
  </BigButton>
);

const Command = ({ icon, children, arrow }) => (
  <CommandButton>{icon}<span>{children}</span>{arrow && <Arrow />}</CommandButton>
);

const Select = ({ w, label, value }) => (
  <Combo $w={w}>
    <select aria-label={label} defaultValue={value}><option>{value}</option></select>
    <ComboArrow><Arrow /></ComboArrow>
  </Combo>
);

const RibbonView = () => (
  <Ribbon>
    <Group name="Presse-papiers" launcher>
      <Big icon={<PasteIcon />} w={26} a="Coller" />
      <Column>
        <Command icon={<CutIcon />}>Couper</Command>
        <Command icon={<CopyIcon />} arrow>Copier</Command>
        <Command icon={<BrushIcon />}>Reproduire la mise en forme</Command>
      </Column>
    </Group>

    <Group name="Police" launcher pad="3px 2px">
      <Column $gap={5}>
        <Line>
          <Select w={59} label="Police" value="Arial" />
          <Select w={23} label="Taille" value="8" />
          <IconButton $w={12} $size={7} aria-label="Agrandir">Aˆ</IconButton>
          <IconButton $w={12} aria-label="Réduire">Aˇ</IconButton>
        </Line>
        <Line>
          <IconButton $w={12} $on><Strong>G</Strong></IconButton>
          <IconButton $w={11}><Strong $i>I</Strong></IconButton>
          <IconButton $w={22}><Strong $u>S</Strong>&nbsp;<Arrow /></IconButton>
          <IconButton $w={20} aria-label="Bordures"><BorderIcon /><Arrow /></IconButton>
          <IconButton $w={20} aria-label="Remplissage"><FillIcon /><Arrow /></IconButton>
          <IconButton $w={20} aria-label="Couleur"><FontColor>A</FontColor><Arrow /></IconButton>
        </Line>
      </Column>
    </Group>

    <Group name="Alignement" launcher pad="3px 3px">
      <Column $gap={5}>
        <Line $gap={1}>
          <IconButton $w={11} aria-label="Haut"><Bars ys={[1, 4]} widths={[7, 7]} /></IconButton>
          <IconButton $w={11} $on aria-label="Milieu"><Bars ys={[3, 6]} widths={[7, 7]} /></IconButton>
          <IconButton $w={11} aria-label="Bas"><Bars ys={[5, 8]} widths={[7, 7]} /></IconButton>
          <IconButton $w={32} aria-label="Orientation"><OrientIcon /><Arrow /></IconButton>
          <Command icon={<WrapIcon />}>Renvoyer à la ligne automatiquement</Command>
        </Line>
        <Line $gap={1}>
          <IconButton $w={11} aria-label="Gauche"><Bars ys={[1, 4, 7]} widths={[7, 5, 7]} side="left" /></IconButton>
          <IconButton $w={11} $on aria-label="Centre"><Bars ys={[1, 4, 7]} widths={[7, 5, 7]} /></IconButton>
          <IconButton $w={11} aria-label="Droite"><Bars ys={[1, 4, 7]} widths={[7, 5, 7]} side="right" /></IconButton>
          <IconButton $w={32} aria-label="Retrait"><IndentIcon /><IndentIcon flip /></IconButton>
          <Command icon={<MergeIcon />} arrow>Fusionner et centrer</Command>
        </Line>
      </Column>
    </Group>

    <Group name="Nombre" launcher pad="3px 2px">
      <Column $gap={5}>
        <Line><Select w={70} label="Format de nombre" value="Personnalisée" /></Line>
        <Line $gap={2}>
          <IconButton $w={18} aria-label="Monnaie"><MoneyIcon /><Arrow /></IconButton>
          <IconButton $w={9} $size={7}>%</IconButton>
          <IconButton $w={10}>000</IconButton>
          <VLine />
          <IconButton $w={11} aria-label="Ajouter une décimale"><DecimalIcon /></IconButton>
          <IconButton $w={11} aria-label="Réduire les décimales"><DecimalIcon less /></IconButton>
        </Line>
      </Column>
    </Group>

    <Group name="Style" gap={1} pad="1px 0 0 1px">
      <Big icon={<CondIcon />} w={49} a="Mise en forme" b="conditionnelle" />
      <Big icon={<TableStyleIcon />} w={51} a="Mettre sous forme" b="de tableau" />
      <Gallery>
        <StyleCell>Normal 2 2</StyleCell>
        <StyleCell>Normal 2 2 2</StyleCell>
        <StyleCell $on>Normal</StyleCell>
        <StyleCell $bad>Insatisfaisant</StyleCell>
        <GalleryScroll>
          <button aria-label="Haut"><Tri d={UP} c="#bbb" /></button>
          <button aria-label="Bas"><Tri d={DOWN} /></button>
          <button aria-label="Plus"><Tri d={DOWN} /></button>
        </GalleryScroll>
      </Gallery>
    </Group>

    <Group name="Cellules" pad="1px 0">
      <Big icon={<InsertIcon />} w={27} a="Insérer" />
      <Big icon={<DeleteIcon />} w={28} a="Supprimer" />
      <Big icon={<FormatIcon />} w={26} a="Format" />
    </Group>

    <Group name="Édition" gap={1} pad="0 0 0 4px">
      <Column>
        <Command icon={<SumIcon />} arrow>Somme automatique&nbsp;</Command>
        <Command icon={<FillDownIcon />} arrow>Remplissage</Command>
        <Command icon={<EraserIcon />} arrow>Effacer</Command>
      </Column>
      <Big icon={<SortIcon />} w={22} a="Trier et" b="filtrer" />
      <Big icon={<FindIcon />} w={42} a="Rechercher et" b="sélectionner" />
    </Group>

    <CollapseCorner>
      <IconButton $w={5} $h={5} aria-label="Réduire le ruban">
        <svg width="5" height="4" viewBox="0 0 5 4"><path d="M.5 3.200 2.500 1l2 2.200" fill="none" stroke="#555" /></svg>
      </IconButton>
    </CollapseCorner>
  </Ribbon>
);

export default function App() {
  return (
    <Window>
      <GlobalStyle />
      <TitleBar>
        <TitleIcons $gap={7}>
          <ExcelLogo />
          <IconButton aria-label="Enregistrer"><SaveIcon /></IconButton>
          <IconButton aria-label="Annuler"><UndoIcon c="#2f6fb5" /><Arrow /></IconButton>
          <IconButton aria-label="Rétablir"><UndoIcon c="#b5b5b5" flip /><Arrow /></IconButton>
          <Arrow />
        </TitleIcons>
        <Title>ETS2 Carnet de bord Sky - Microsoft Excel</Title>
        <TitleIcons $gap={7} $end>
          <IconButton $bold>?</IconButton>
          <IconButton aria-label="Options du ruban"><RibbonOptions /></IconButton>
          <IconButton aria-label="Réduire"><MinIcon /></IconButton>
          <IconButton aria-label="Restaurer"><RestoreIcon /></IconButton>
          <IconButton aria-label="Fermer"><Cross /></IconButton>
        </TitleIcons>
      </TitleBar>

      <Tabs>
        <Tab $file $w={32}>FICHIER</Tab>
        <Tab $active $w={41}>ACCUEIL</Tab>
        {RIBBON_TABS.map(([name, w]) => <Tab key={name} $w={w}>{name}</Tab>)}
        <Connexion href="#connexion">Connexion</Connexion>
      </Tabs>

      <RibbonView />

      <FormulaBar>
        <Field $w={55}>
          <input aria-label="Zone Nom" defaultValue="L23" />
          <Arrow />
        </Field>
        <svg width="9" height="8" viewBox="0 0 9 8" fill="#aaa">
          <path d="M4 0h1v1H4zM4 3h1v1H4zM4 6h1v1H4z" />
        </svg>
        <FormulaButtons>
          <IconButton aria-label="Annuler la saisie"><Cross s={8} c="#aaa" w={0.9} /></IconButton>
          <IconButton aria-label="Valider"><CheckIcon /></IconButton>
          <IconButton aria-label="Insérer une fonction"><Fx>fx</Fx></IconButton>
        </FormulaButtons>
        <Field>
          <input aria-label="Barre de formule" defaultValue="Travail" />
          <svg width="6" height="4" viewBox="0 0 6 4"><path d="M.5.5 3 3 5.500.5" fill="none" stroke="#555" strokeWidth="1.300" /></svg>
        </Field>
      </FormulaBar>

      <SheetArea>
        <SheetPane>
          <Sheet />
          <Cursor>
            <svg width="9" height="15" viewBox="0 0 9 15">
              <path d="M.5.5h8v14h-8z" fill="#ffff00" stroke="#b8a000" strokeWidth=".6" />
              <path d="M1.500 3.500h6v2h-6zM1.500 9h6v3h-6z" fill="#000" />
            </svg>
          </Cursor>
        </SheetPane>
        <Scrollbar>
          <ScrollButton aria-label="Monter"><Tri d={UP} /></ScrollButton>
          <ScrollThumb />
          <ScrollTrack />
          <ScrollButton aria-label="Descendre"><Tri d={DOWN} /></ScrollButton>
        </Scrollbar>
      </SheetArea>

      <SheetBar>
        <TabNav>
          <IconButton aria-label="Feuille précédente"><Tri d={LEFT} c={C.excel} /></IconButton>
          <IconButton aria-label="Feuille suivante"><Tri d={RIGHT} c={C.excel} /></IconButton>
          <span>...</span>
        </TabNav>
        {SHEET_TABS.map(([name, w, kind]) => (
          <SheetTab key={name} $w={w} $active={kind === "active"} $blue={kind === "blue"}>{name}</SheetTab>
        ))}
        <TabSliver />
        <span>...</span>
        <IconButton $w={18} aria-label="Nouvelle feuille">
          <svg width="9" height="9" viewBox="0 0 9 9" fill="none" stroke="#666" strokeWidth=".8">
            <circle cx="4.500" cy="4.500" r="3.800" /><path d="M4.500 2.500v4M2.500 4.500h4" />
          </svg>
        </IconButton>
        <svg width="9" height="8" viewBox="0 0 9 8" fill="#aaa">
          <path d="M5 0h1v1H5zM5 3h1v1H5zM5 6h1v1H5z" />
        </svg>
        <HScroll>
          <ScrollButton aria-label="Gauche"><Tri d={LEFT} /></ScrollButton>
          <span />
          <ScrollButton aria-label="Droite"><Tri d={RIGHT} /></ScrollButton>
        </HScroll>
      </SheetBar>

      <StatusBar>
        <span>PRÊT</span>
        <StatusTools>
          <IconButton $w={15} aria-label="Normal">
            <svg width="7" height="7" viewBox="0 0 7 7" stroke="#fff" strokeWidth=".9" fill="none"><path d="M.5.5h6v6h-6zM2.500.5v6M4.500.5v6M.5 2.500h6M.5 4.500h6" /></svg>
          </IconButton>
          <IconButton $w={14} aria-label="Mise en page">
            <svg width="8" height="7" viewBox="0 0 8 7" stroke="#d5e8dd" strokeWidth=".8" fill="none"><path d="M.5.5h7v6h-7zM2.500 1v5M5.500 1v5M2.500 2.500h3M2.500 4h3" /></svg>
          </IconButton>
          <IconButton $w={14} aria-label="Sauts de page">
            <svg width="8" height="7" viewBox="0 0 8 7"><path d="M.5.5h7v6h-7z" stroke="#fff" strokeWidth=".8" fill="none" /><path d="M.5.5h3v4h-3zM4.500.5h3v3h-3z" fill="#fff" /></svg>
          </IconButton>
          <Strong>−</Strong>
          <Zoom type="range" aria-label="Zoom" defaultValue="60" />
          <Strong>+</Strong>
          <span>155 %</span>
        </StatusTools>
      </StatusBar>
    </Window>
  );
}
